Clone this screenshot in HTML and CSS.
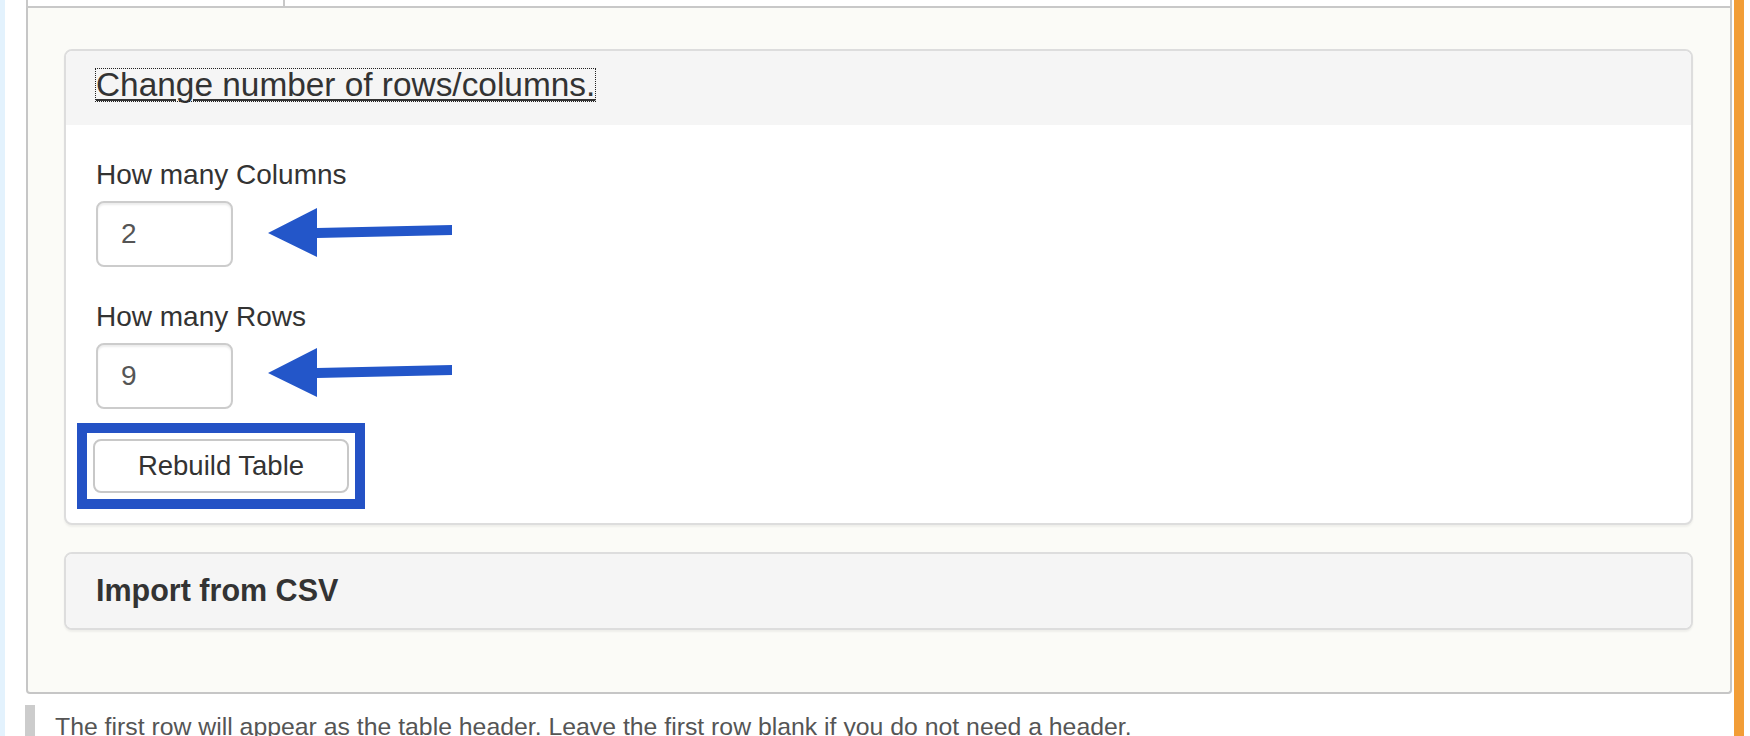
FILE: index.html
```html
<!DOCTYPE html>
<html lang="en">
<head>
  <meta charset="UTF-8">
  <meta name="viewport" content="width=device-width, initial-scale=1.0">
  <title>Table settings</title>
  <link rel="stylesheet" href="styles.css">
</head>
<body>

  <div class="borde-izq"></div>

  <div class="pagina">
    <div class="pestanas">
      <div class="pestana"></div>
    </div>

    <div class="panel-principal">

      <div class="tarjeta">
        <div class="tarjeta-cabecera">
          <a href="#" class="titulo-enlace">Change number of rows/columns.</a>
        </div>
        <div class="tarjeta-cuerpo">
          <div class="grupo">
            <label class="etiqueta" for="columnas">How many Columns</label>
            <input class="campo" id="columnas" type="text" value="2">
            <svg class="flecha" width="186" height="53" viewBox="0 0 186 53">
              <polygon points="1,27 50,2 50,22 185,19 185,29 50,32 50,51" fill="#2356c9"/>
            </svg>
          </div>
          <div class="grupo">
            <label class="etiqueta" for="filas">How many Rows</label>
            <input class="campo" id="filas" type="text" value="9">
            <svg class="flecha flecha-filas" width="186" height="53" viewBox="0 0 186 53">
              <polygon points="1,27 50,2 50,22 185,19 185,29 50,32 50,51" fill="#2356c9"/>
            </svg>
          </div>
          <div class="marco">
            <button class="boton">Rebuild Table</button>
          </div>
        </div>
      </div>

      <div class="tarjeta tarjeta-csv">
        <div class="tarjeta-cabecera">
          <span class="titulo-csv">Import from CSV</span>
        </div>
      </div>

    </div>

    <p class="nota">The first row will appear as the table header. Leave the first row blank if you do not need a header.</p>
  </div>

  <div class="borde-der"></div>

</body>
</html>
```

FILE: styles.css
```css
html, body {
  margin: 0;
  height: 100vh;
  overflow: hidden;
}

body {
  display: flex;
  font-family: 'Liberation Sans', Arial, Helvetica, sans-serif;
  color: #333;
  background-color: #fff;
}

.borde-izq {
  width: 5px;
  background-color: #e3f2fd;
}

.borde-der {
  width: 10px;
  margin-left: 2px;
  margin-right: 6px;
  background-color: #f29d36;
}

.pagina {
  flex: 1;
  padding-left: 21px;
}

/* fila de pestañas cortada arriba */
.pestanas {
  height: 6px;
  border-left: 2px solid #c8c8c8;
  border-right: 2px solid #c8c8c8;
  border-bottom: 2px solid #c8c8c8;
}

.pestana {
  width: 255px;
  height: 6px;
  border-right: 2px solid #c8c8c8;
}

.panel-principal {
  background-color: #fbfbf7;
  border: 2px solid #c6c6c6;
  border-top: none;
  border-radius: 0 0 4px 4px;
  padding: 41px 37px 62px 36px;
}

.tarjeta {
  background-color: #fff;
  border: 2px solid #dddddd;
  border-radius: 8px;
  box-shadow: 0 2px 2px rgba(0, 0, 0, 0.05);
  overflow: hidden;
}

.tarjeta-csv {
  margin-top: 27px;
}

.tarjeta-cabecera {
  display: flex;
  align-items: flex-start;
  background-color: #f5f5f5;
  padding: 18px 30px 24px;
}

.tarjeta-csv .tarjeta-cabecera {
  padding: 19px 30px 21px;
}

.titulo-enlace {
  font-size: 33.4px;
  line-height: 32px;
  color: #333;
  text-decoration: underline;
  text-decoration-thickness: 2px;
  text-underline-offset: 3px;
  outline: 1px dotted #222;
}

.titulo-csv {
  font-size: 30.5px;
  line-height: 34px;
  font-weight: bold;
  color: #333;
}

.tarjeta-cuerpo {
  padding: 30px;
}

.grupo {
  position: relative;
  margin-bottom: 30px;
}

.etiqueta {
  display: block;
  font-size: 28px;
  line-height: 40px;
  margin-bottom: 6px;
}

.campo {
  display: block;
  box-sizing: border-box;
  width: 137px;
  height: 66px;
  padding: 0 23px;
  border: 2px solid #cccccc;
  border-radius: 8px;
  box-shadow: inset 0 2px 2px rgba(0, 0, 0, 0.075);
  font-family: 'Liberation Sans', Arial, Helvetica, sans-serif;
  font-size: 28px;
  color: #555;
  background-color: #fff;
}

/* flechas de anotación encima del formulario */
.flecha {
  position: absolute;
  left: 171px;
  top: 51px;
}

.flecha-filas {
  top: 49px;
}

/* recuadro azul de la anotación */
.marco {
  display: inline-block;
  padding: 6px;
  border: 10px solid #2452c5;
  margin: -16px 0 -16px -19px;
}

.boton {
  display: block;
  box-sizing: border-box;
  width: 256px;
  height: 54px;
  padding: 0;
  border: 2px solid #c8c8c8;
  border-radius: 8px;
  background-color: #fff;
  font-family: 'Liberation Sans', Arial, Helvetica, sans-serif;
  font-size: 27.5px;
  line-height: 50px;
  color: #333;
}

.nota {
  margin: 11px 0 0 -1px;
  padding: 4px 0 0 20px;
  border-left: 10px solid #cccccc;
  font-size: 24.8px;
  line-height: 36px;
  color: #555;
}
```
